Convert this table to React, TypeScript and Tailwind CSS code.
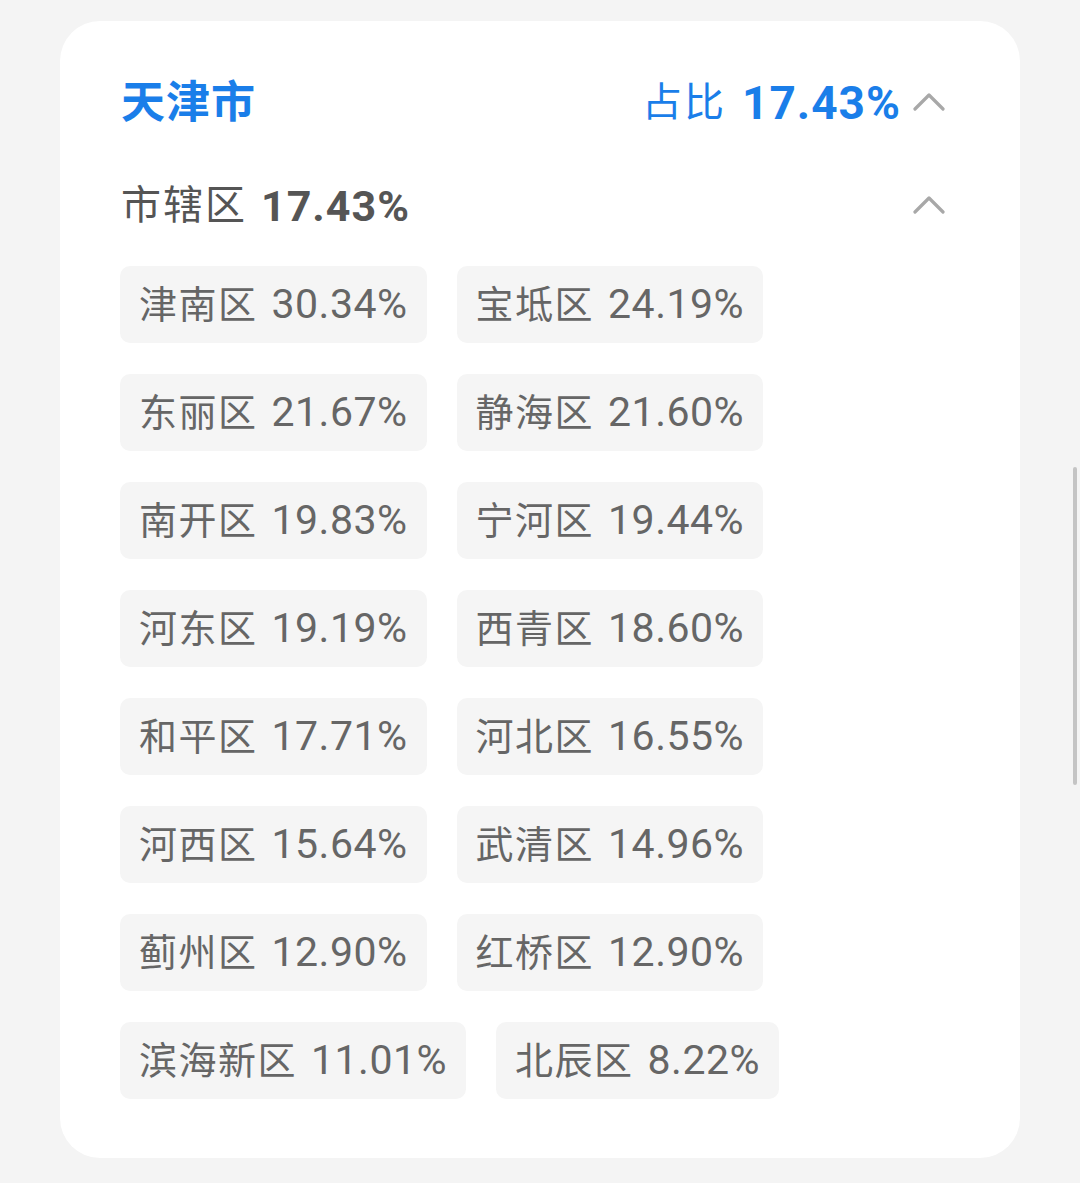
import React from "react";

const items: [string, string][] = [
  ["津南区", "30.34%"],
  ["宝坻区", "24.19%"],
  ["东丽区", "21.67%"],
  ["静海区", "21.60%"],
  ["南开区", "19.83%"],
  ["宁河区", "19.44%"],
  ["河东区", "19.19%"],
  ["西青区", "18.60%"],
  ["和平区", "17.71%"],
  ["河北区", "16.55%"],
  ["河西区", "15.64%"],
  ["武清区", "14.96%"],
  ["蓟州区", "12.90%"],
  ["红桥区", "12.90%"],
  ["滨海新区", "11.01%"],
  ["北辰区", "8.22%"],
];

const Chevron = () => (
  <svg width="32" height="20" viewBox="0 0 32 20" fill="none">
    <path d="M2 17 L16 3 L30 17" stroke="#a8a8a8" strokeWidth="3.2" strokeLinecap="round" strokeLinejoin="round" />
  </svg>
);

export default function App() {
  return (
    <div
      className="relative w-[1080px] h-[1183px] bg-[#f4f4f4] pt-[21px] pl-[60px] overflow-hidden"
      style={{ fontFamily: 'Roboto, "Noto Sans CJK SC", sans-serif' }}
    >
      <div className="w-[960px] h-[1137px] bg-white rounded-[40px] pt-[52px] pl-[61px] pr-[75px]">
        <div className="flex h-[60px] items-center justify-between">
          <div className="text-[44px] font-bold text-[#1a7ee9] leading-none tracking-[1px]">天津市</div>
          <div className="flex items-center">
            <span className="text-[40px] text-[#1a7ee9] leading-none tracking-[2px]">占比</span>
            <span className="ml-[16px] text-[46px] font-bold text-[#1a7ee9] leading-none tracking-[1px]">17.43%</span>
            <span className="ml-[12px] mt-[-2px]"><Chevron /></span>
          </div>
        </div>
        <div className="mt-[43px] flex h-[60px] items-center justify-between">
          <div className="flex items-center text-[#555555] leading-none">
            <span className="text-[40px] tracking-[2px]">市辖区</span>
            <span className="ml-[14px] text-[43px] font-bold tracking-[1px]">17.43%</span>
          </div>
          <span className="mt-[-2px]"><Chevron /></span>
        </div>
        <div className="mt-[30px] flex flex-wrap gap-x-[30px] gap-y-[31px] w-[700px] -ml-px">
          {items.map(([name, pct]) => (
            <div
              key={name}
              className="h-[77px] rounded-[10px] bg-[#f5f5f5] px-[19px] flex items-center text-[#666666] leading-none whitespace-nowrap"
            >
              <span className="text-[38px] tracking-[1.5px]">{name}</span>
              <span className="ml-[14px] text-[41px] tracking-[0.5px]">{pct}</span>
            </div>
          ))}
        </div>
      </div>
      <div className="absolute left-[1073px] top-[467px] w-[4px] h-[318px] rounded-full bg-[#c4c4c4]" />
    </div>
  );
}
